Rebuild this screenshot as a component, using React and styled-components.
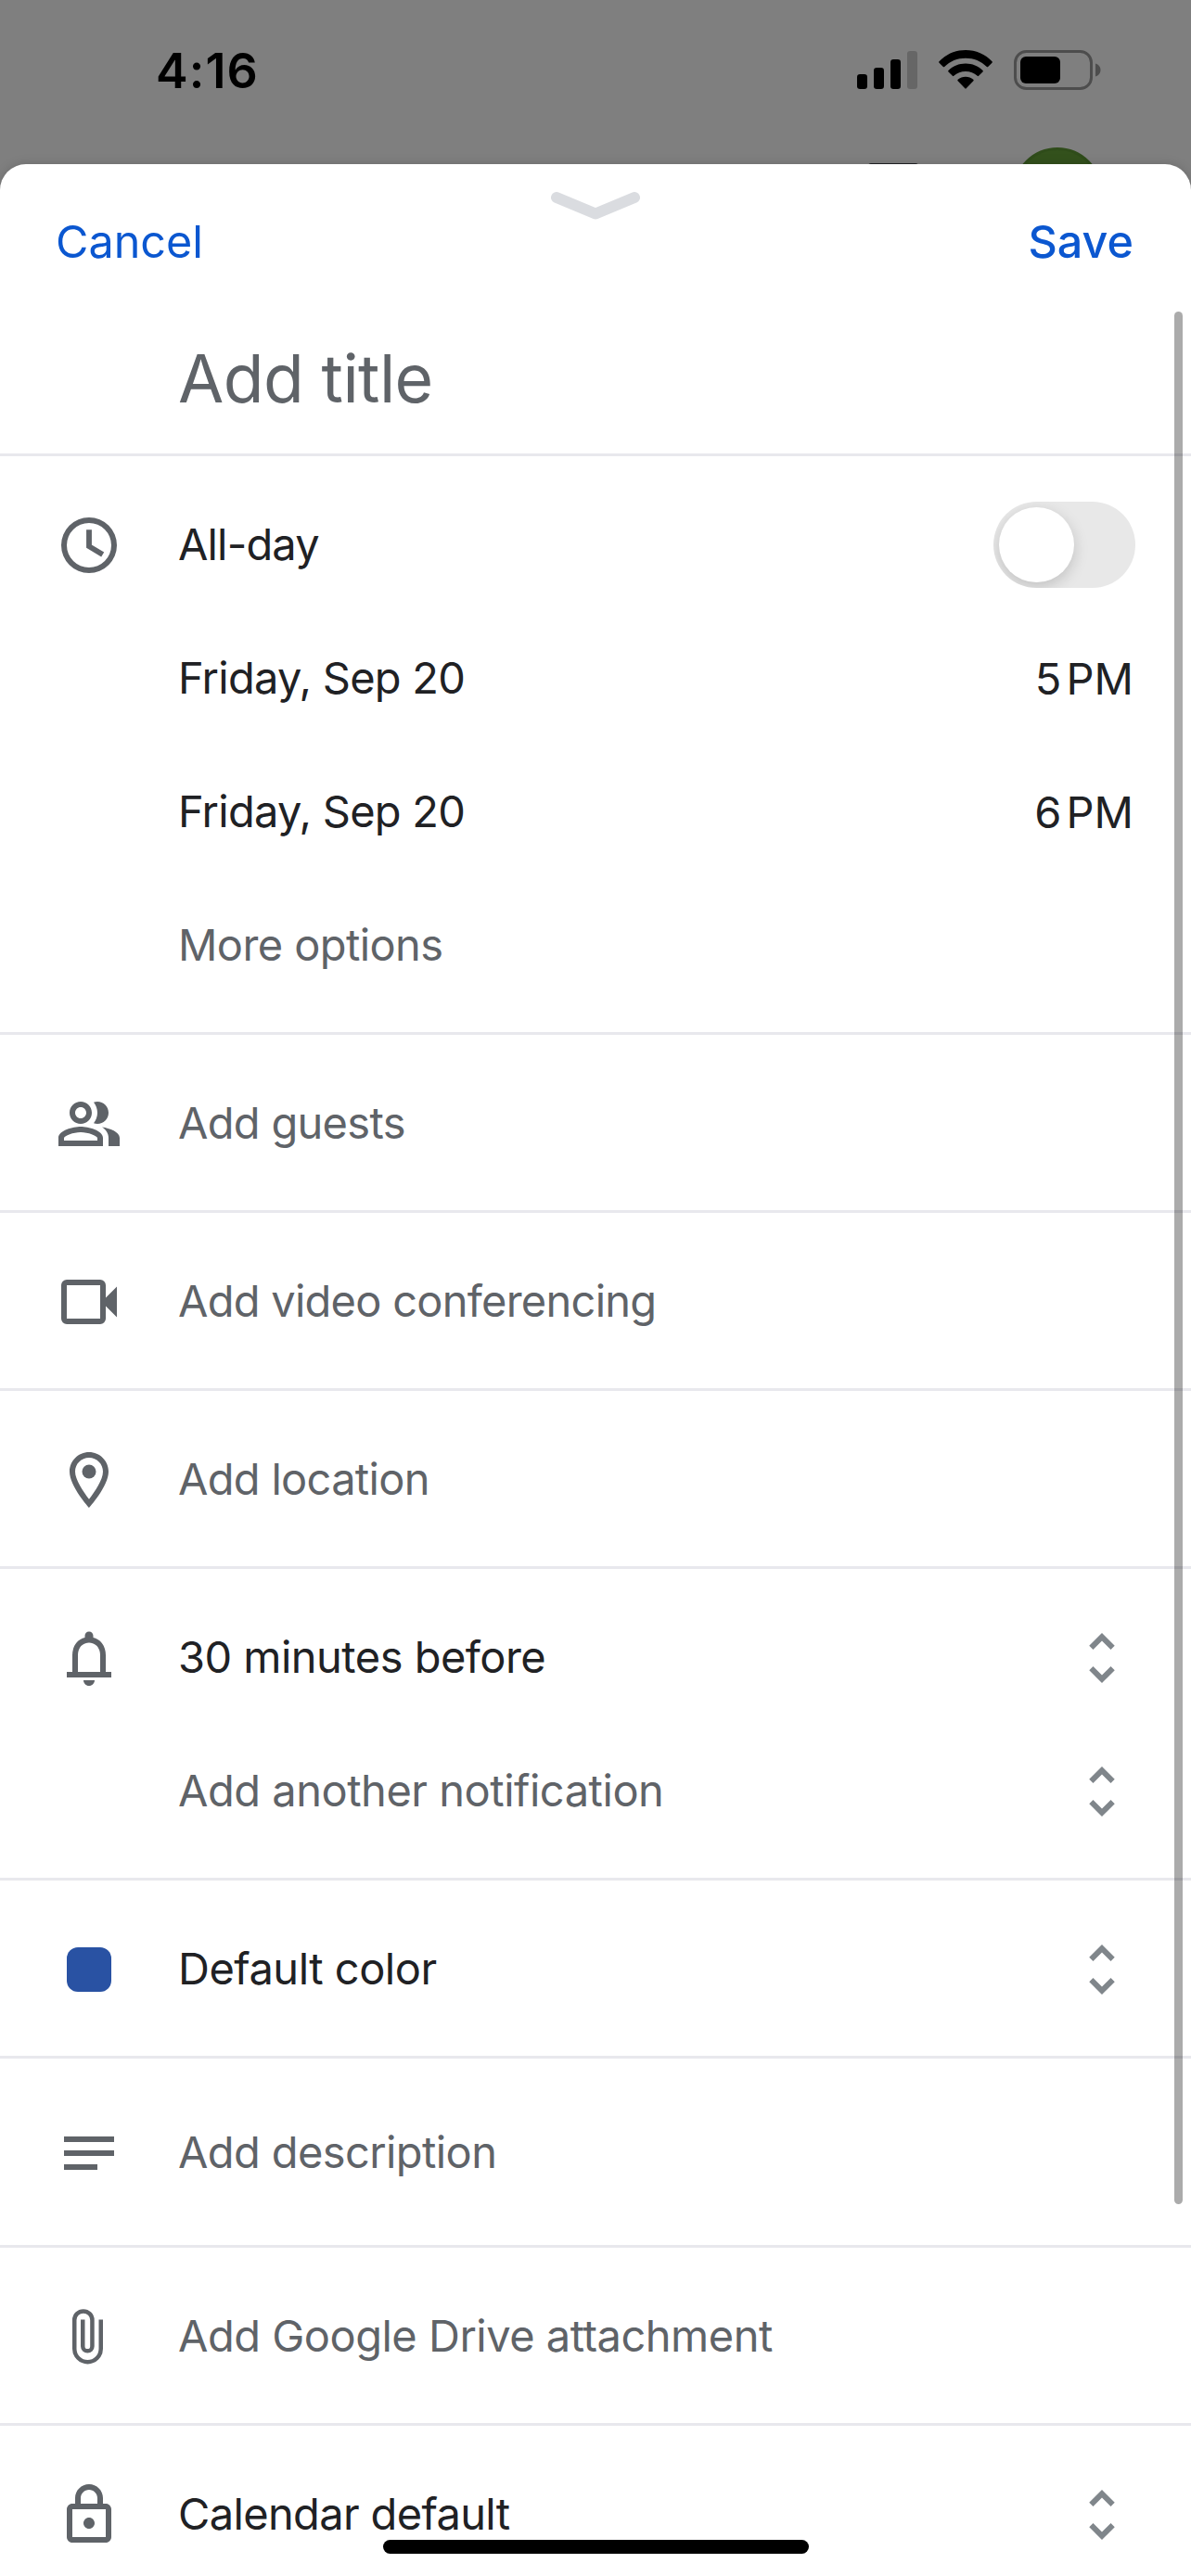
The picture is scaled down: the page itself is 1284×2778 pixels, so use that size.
import React from 'react';
import styled, { createGlobalStyle } from 'styled-components';

const color = {
  ink: '#202124',
  muted: '#5f6368',
  link: '#0b57d0',
  divider: '#e8e8ed',
  chevron: '#80868b',
};

const GlobalStyle = createGlobalStyle`
  *, *::before, *::after { box-sizing: border-box; }
  html, body { margin: 0; padding: 0; }
  body {
    background: #7f7f7f;
    font-family: Inter, "Liberation Sans", sans-serif;
  }
`;

const Screen = styled.main`
  position: relative;
  display: flex;
  flex-direction: column;
  width: 1284px;
  height: 2778px;
  overflow: hidden;
  background: #7f7f7f;
`;

/* Status bar and the dimmed page behind the sheet */

const StatusBar = styled.header`
  flex: none;
  display: flex;
  justify-content: space-between;
  align-items: flex-start;
  height: 177px;
  padding: 54px 97px 0 168px;
`;

const Clock = styled.time`
  font-size: 52px;
  font-weight: 600;
  line-height: 46px;
  letter-spacing: 1.1px;
  color: #000;
`;

const StatusIcons = styled.div`
  display: flex;
  align-items: flex-start;
  gap: 23px;
  svg { display: block; }
`;

const Avatar = styled.div`
  position: absolute;
  left: 1092px;
  top: 159px;
  width: 96px;
  height: 96px;
  border: 3px solid #2f4c1a;
  border-radius: 50%;
  background: #33511c;
`;

const HiddenControl = styled.div`
  position: absolute;
  left: 936px;
  top: 176px;
  width: 54px;
  height: 20px;
  border-radius: 3px;
  background: #202124;
`;

/* Sheet */

const Sheet = styled.section`
  position: relative;
  flex: 1;
  display: flex;
  flex-direction: column;
  border-radius: 28px 28px 0 0;
  background: #fff;
  box-shadow: 0 0 12px rgba(0, 0, 0, 0.16);
`;

const Handle = styled.svg`
  position: absolute;
  left: 594px;
  top: 30px;
`;

const SheetHeader = styled.div`
  flex: none;
  display: flex;
  justify-content: space-between;
  height: 159px;
  padding: 54px 62px 0 60px;
`;

const TextButton = styled.button`
  height: 60px;
  padding: 0;
  border: 0;
  background: none;
  font: ${(p) => (p.$strong ? 500 : 400)} 48.5px/60px Inter, "Liberation Sans", sans-serif;
  color: ${color.link};
`;

const TitleField = styled.div`
  flex: none;
  height: 156px;
  padding: 26px 60px 0 192px;
  border-bottom: 3px solid ${color.divider};
  font-size: 71.5px;
  line-height: 92px;
  letter-spacing: -0.6px;
  color: ${color.muted};
`;

const Section = styled.section`
  flex: none;
  padding: 24px 0 21px;
  border-bottom: 3px solid ${color.divider};
`;

const RowBox = styled.div`
  display: grid;
  grid-template-columns: 132px 1fr auto;
  align-items: center;
  height: ${(p) => (p.$tall ? 156 : 144)}px;
  padding: 0 60px;
`;

const Label = styled.span`
  padding-bottom: 3px;
  font-size: 47px;
  line-height: 60px;
  letter-spacing: ${(p) => p.$tracking}px;
  white-space: nowrap;
  color: ${(p) => (p.$muted ? color.muted : color.ink)};
`;

const TimeValue = styled.span`
  padding-right: 2px;
  font-size: 47px;
  line-height: 60px;
  word-spacing: -8px;
  color: ${color.ink};
`;

const IconBox = styled.span`
  display: flex;
  align-items: center;
  justify-content: center;
  width: 72px;
  height: 72px;
`;

const Icon = styled.svg`
  display: block;
  width: 72px;
  height: 72px;
  fill: ${(p) => p.$color || color.muted};
`;

const Swatch = styled.span`
  width: 48px;
  height: 48px;
  border-radius: 12px;
  background: #2952a3;
`;

const Track = styled.span`
  display: flex;
  width: 153px;
  height: 93px;
  margin-bottom: 1px;
  padding: 6px;
  border-radius: 47px;
  overflow: hidden;
  background: #e8e8e8;
`;

const Knob = styled.span`
  width: 81px;
  height: 81px;
  border-radius: 50%;
  background: #fff;
  box-shadow: 0 5px 16px rgba(0, 0, 0, 0.17);
`;

const ScrollThumb = styled.div`
  position: absolute;
  left: 1266px;
  top: 336px;
  width: 9px;
  height: 2041px;
  border-radius: 5px;
  background: rgba(0, 0, 0, 0.33);
`;

const HomeIndicator = styled.div`
  position: absolute;
  left: 413px;
  top: 2739px;
  width: 459px;
  height: 15px;
  border-radius: 8px;
  background: #000;
`;

const Glyph = ({ d, children, tint }) => (
  <Icon viewBox="0 0 24 24" $color={tint} aria-hidden="true">
    {d && <path fillRule="evenodd" d={d} />}
    {children}
  </Icon>
);

const icons = {
  clock: (
    <Glyph d="M12 2a10 10 0 1 0 0 20 10 10 0 0 0 0-20zm0 2a8 8 0 1 1 0 16 8 8 0 0 1 0-16z">
      <path d="M12 6.4v6l4.9 2.95" fill="none" stroke={color.muted} strokeWidth="1.95" />
    </Glyph>
  ),
  guests: (
    <Glyph d="M16.67 13.13C18.04 14.06 19 15.32 19 17v3h4v-3c0-2.18-3.57-3.47-6.33-3.87zM15 12c2.21 0 4-1.79 4-4s-1.79-4-4-4c-.47 0-.91.1-1.33.24C14.5 5.27 15 6.58 15 8s-.5 2.73-1.33 3.76c.42.14.86.24 1.33.24zM9 12c2.21 0 4-1.79 4-4s-1.79-4-4-4-4 1.79-4 4 1.79 4 4 4zm0-6c1.1 0 2 .9 2 2s-.9 2-2 2-2-.9-2-2 .9-2 2-2zM9 13c-2.67 0-8 1.34-8 4v3h16v-3c0-2.66-5.33-4-8-4zm6 5H3v-.99C3.2 16.29 6.3 15 9 15s5.8 1.29 6 2v1z" />
  ),
  video: (
    <Glyph d="M4 4h12a2 2 0 0 1 2 2v4.5l4-4v11l-4-4V18a2 2 0 0 1-2 2H4a2 2 0 0 1-2-2V6a2 2 0 0 1 2-2zm0 2v12h12V6z" />
  ),
  pin: (
    <Glyph d="M12 2C8.13 2 5 5.13 5 9c0 5.25 7 13 7 13s7-7.75 7-13c0-3.87-3.13-7-7-7zM7 9c0-2.76 2.24-5 5-5s5 2.24 5 5c0 2.88-2.88 7.19-5 9.88C9.92 16.21 7 11.85 7 9z">
      <circle cx="12" cy="9" r="2.5" />
    </Glyph>
  ),
  bell: (
    <Glyph d="M12 22c1.1 0 2-.9 2-2h-4c0 1.1.9 2 2 2zM18 17v-6c0-3.07-1.63-5.64-4.5-6.32V4c0-.83-.67-1.5-1.5-1.5s-1.5.67-1.5 1.5v.68C7.64 5.36 6 7.92 6 11v6H4v2h16v-2zm-2 0H8v-6c0-2.48 1.51-4.5 4-4.5s4 2.02 4 4.5z" />
  ),
  lines: <Glyph d="M3 6h18v2H3zM3 11h18v2H3zM3 16h12v2H3z" />,
  clip: (
    <Glyph>
      <path
        d="M16.25 5.85V16.3a4.75 4.75 0 0 1-9.5 0V6a3.2 3.2 0 0 1 6.4 0v9.4a1.7 1.7 0 0 1-3.4 0V5.85"
        fill="none"
        stroke={color.muted}
        strokeWidth="1.5"
      />
    </Glyph>
  ),
  lock: (
    <Glyph d="M18 8h-1V6c0-2.76-2.24-5-5-5S7 3.24 7 6v2H6c-1.1 0-2 .9-2 2v10c0 1.1.9 2 2 2h12c1.1 0 2-.9 2-2V10c0-1.1-.9-2-2-2zM9 6c0-1.66 1.34-3 3-3s3 1.34 3 3v2H9zm9 14H6V10h12zm-6-3c1.1 0 2-.9 2-2s-.9-2-2-2-2 .9-2 2 .9 2 2 2z" />
  ),
  swatch: <Swatch />,
};

const Unfold = () => (
  <Glyph
    tint={color.chevron}
    d="M12 5.83L15.17 9l1.41-1.41L12 3 7.41 7.59 8.83 9 12 5.83zm0 12.34L8.83 15l-1.41 1.41L12 21l4.59-4.59L15.17 15 12 18.17z"
  />
);

const Row = ({ icon, label, tracking, muted, tall, children }) => (
  <RowBox $tall={tall}>
    <IconBox>{icon && icons[icon]}</IconBox>
    <Label $muted={muted} $tracking={tracking}>{label}</Label>
    {children}
  </RowBox>
);

const SignalIcon = () => (
  <svg width="65" height="42" viewBox="0 0 65 42" aria-hidden="true">
    <rect x="0" y="26" width="11" height="16" rx="3.2" />
    <rect x="18" y="19" width="11" height="23" rx="3.2" />
    <rect x="36" y="10" width="11" height="32" rx="3.2" />
    <rect x="54" y="1" width="11" height="41" rx="3.2" fill="#666" />
  </svg>
);

const WifiIcon = () => (
  <svg width="58" height="43" viewBox="0 0 58 43" aria-hidden="true">
    <path d="M29 0C40 0 50.4 4.5 57.5 12.300a1 1 0 0 1 0 1.400l-4.300 4.300a1 1 0 0 1-1.400 0C45.800 11.900 37.800 8.700 29 8.700S12.200 11.900 6.200 18a1 1 0 0 1-1.400 0L.5 13.700a1 1 0 0 1 0-1.400C7.600 4.500 18 0 29 0z" />
    <path d="M29 14.500c7.100 0 13.600 2.700 18.500 7.400a1 1 0 0 1 0 1.500L43.100 27.800a1 1 0 0 1-1.400 0C38.200 24.700 33.800 23 29 23s-9.200 1.700-12.700 4.800a1 1 0 0 1-1.400 0L10.500 23.400a1 1 0 0 1 0-1.500C15.400 17.200 21.900 14.500 29 14.500z" />
    <path d="M29 28.700c3.100 0 6 1.100 8.300 3a1 1 0 0 1 .1 1.500l-7.700 8.100a1 1 0 0 1-1.400 0l-7.700-8.100a1 1 0 0 1 .1-1.500C23 29.800 25.900 28.700 29 28.700z" />
  </svg>
);

const BatteryIcon = () => (
  <svg width="94" height="43" viewBox="0 0 94 43" aria-hidden="true">
    <rect x="1.5" y="1.5" width="82" height="40" rx="12" fill="none" stroke="#4d4d4d" strokeWidth="3" />
    <rect x="7" y="7" width="43" height="29" rx="6" />
    <path d="M88 14.500c3.300 1 5.500 3.700 5.500 7s-2.200 6-5.500 7z" fill="#4d4d4d" />
  </svg>
);

const sections = [
  { rows: [{ icon: 'guests', label: 'Add guests', muted: true, tracking: -0.7 }] },
  { rows: [{ icon: 'video', label: 'Add video conferencing', muted: true, tracking: -0.74 }] },
  { rows: [{ icon: 'pin', label: 'Add location', muted: true, tracking: -0.7 }] },
  {
    rows: [
      { icon: 'bell', label: '30 minutes before', tracking: -0.52, unfold: true },
      { label: 'Add another notification', muted: true, tracking: -0.48, unfold: true },
    ],
  },
  { rows: [{ icon: 'swatch', label: 'Default color', tracking: -0.5, unfold: true }] },
  { rows: [{ icon: 'lines', label: 'Add description', muted: true, tall: true, tracking: -0.6 }] },
  { rows: [{ icon: 'clip', label: 'Add Google Drive attachment', muted: true, tracking: -0.5 }] },
  { rows: [{ icon: 'lock', label: 'Calendar default', tracking: -0.65, unfold: true }] },
];

export default function App() {
  return (
    <Screen>
      <GlobalStyle />
      <StatusBar>
        <Clock>4:16</Clock>
        <StatusIcons>
          <SignalIcon />
          <WifiIcon />
          <BatteryIcon />
        </StatusIcons>
      </StatusBar>
      <HiddenControl />
      <Avatar />
      <Sheet>
        <Handle width="96" height="32" viewBox="0 0 96 32" aria-hidden="true">
          <path d="M6 6l42 17.500L90 6" fill="none" stroke="#dadce0" strokeWidth="12" strokeLinecap="round" strokeLinejoin="round" />
        </Handle>
        <SheetHeader>
          <TextButton>Cancel</TextButton>
          <TextButton $strong>Save</TextButton>
        </SheetHeader>
        <TitleField>Add title</TitleField>
        <Section>
          <Row icon="clock" label="All-day" tracking={-0.85}>
            <Track><Knob /></Track>
          </Row>
          <Row label="Friday, Sep 20" tracking={-0.75}><TimeValue>5 PM</TimeValue></Row>
          <Row label="Friday, Sep 20" tracking={-0.75}><TimeValue>6 PM</TimeValue></Row>
          <Row label="More options" muted tracking={-0.6} />
        </Section>
        {sections.map(({ rows }) => (
          <Section key={rows[0].label}>
            {rows.map(({ unfold, ...row }) => (
              <Row key={row.label} {...row}>{unfold && <Unfold />}</Row>
            ))}
          </Section>
        ))}
      </Sheet>
      <ScrollThumb />
      <HomeIndicator />
    </Screen>
  );
}
